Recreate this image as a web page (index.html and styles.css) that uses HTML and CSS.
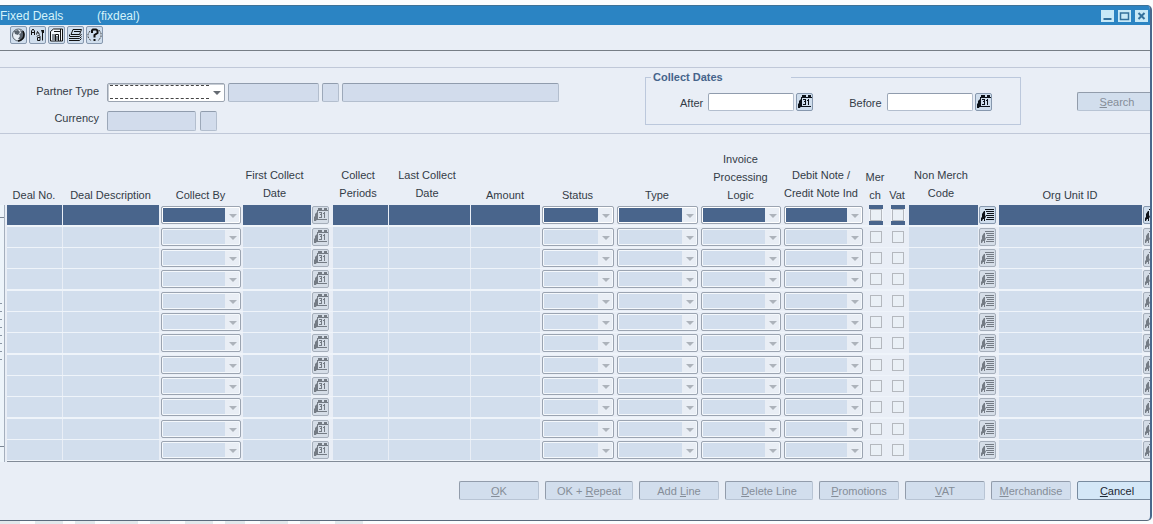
FILE: index.html
```html
<!DOCTYPE html>
<html lang="en">
<head>
<meta charset="utf-8">
<title>Fixed Deals</title>
<link rel="stylesheet" href="styles.css">
</head>
<body>
<svg class="sprite" aria-hidden="true">
  <symbol id="i-calendar" viewBox="0 0 15 16">
    <path d="M4 3h11v1H4zM5 1h4v2H5zM11 1h3v2h-3zM4 3h1v10H4zM3 12h11v1H3zM1 14v-4l1-1V7l2-2v7l-1 2z" fill="currentColor"/>
    <path d="M6 5h3v1H6zM8 6h1v4H8zM7 7h1v1H7zM6 10h3v1H6zM11 5h1v6h-1zM10 6h1v1h-1z" fill="currentColor"/>
  </symbol>
  <symbol id="i-list" viewBox="0 0 15 16">
    <path d="M5 2h9v1H5zM6 4h8v1H6zM7 6h7v1H7zM6 8h8v1H6zM7 10h7v1H7zM6 12h8v1H6z" fill="currentColor"/>
    <path d="M1 14v-3l1-1V7l2-3h1v4l1 2-1 1v3H4v-2H3l-1 2z" fill="currentColor"/>
  </symbol>
</svg>
<main class="window">
  <header class="titlebar">
    <h1>Fixed Deals</h1>
    <span class="module">(fixdeal)</span>
    <div class="winbuttons">
      <button type="button" aria-label="Minimize"><svg viewBox="0 0 12 12"><path d="M2 9h8" stroke-width="2"/></svg></button>
      <button type="button" aria-label="Maximize"><svg viewBox="0 0 12 12"><path d="M2 3h8v6.500H2z" stroke-width="1.500"/></svg></button>
      <button type="button" aria-label="Close"><svg viewBox="0 0 12 12"><path d="M3 3l6 6M9 3l-6 6" stroke-width="2"/></svg></button>
    </div>
  </header>
  <nav class="toolbar" aria-label="Tools">
    <button type="button" class="icon" aria-label="Globe"><svg viewBox="0 0 15 16"><circle cx="7.500" cy="8" r="6" fill="#e8eef5" stroke="#59636e"/><path d="M3 4l4-1 2 2-2 3-3-1zM9 3l4 2v5l-3 3-3-1 2-3-1-2 2-1z" fill="#59636e"/><path d="M12 4c2 4 1 9-5 10" fill="none" stroke="#111" stroke-width="1.500"/></svg></button>
    <button type="button" class="icon" aria-label="Translate"><svg viewBox="0 0 15 16"><path d="M1.500 8V4l1.500-2 1.500 2v4M1.500 5.500h3M6.500 7.500l1-3 2 3M7 9.500c1-2 3-1 3 0v4M10 10.500H7.500v3H10M12.500 5v8.500" fill="none" stroke="#111"/><path d="M11 3h3v3h-2z" fill="#111"/></svg></button>
    <button type="button" class="icon" aria-label="Documents"><svg viewBox="0 0 15 16"><path d="M1.500 4.500l3-2.500h9v12h-12zM5 4.500h7M11.500 2v12M6.500 14V7.500h3V14" fill="#f4f7fa" stroke="#111"/><path d="M3 7h3v7H3zM7 9h2v5H7z" fill="#858b92"/></svg></button>
    <button type="button" class="icon" aria-label="Layers"><svg viewBox="0 0 15 16"><path d="M5 2.500h8.500l-2 5H3zM2 9.500h9.500l2-2.500M1 11.500h10.500l2-2M1 13.500h10.500l2-2M6 4.500h6M1.500 7.500v2" fill="none" stroke="#111"/></svg></button>
    <button type="button" class="icon" aria-label="Help"><svg viewBox="0 0 15 16"><path d="M5 6V3.500L6 2.500h3l1.500 1v2.500L7.500 8v2.500" fill="none" stroke="#111" stroke-width="2"/><path d="M6.500 12h2v2h-2z" fill="#111"/><path d="M3 4L1 7v3l3 4M12 3l2 3v4l-3 4" fill="none" stroke="#444" stroke-dasharray="2 1"/></svg></button>
  </nav>

  <section class="query" aria-label="Search criteria">
    <div class="filters">
      <div class="line">
        <label for="partner">Partner Type</label>
        <span class="combo combo-active"><select id="partner"><option></option></select></span>
        <input class="field w-code" aria-label="Partner code" readonly>
        <input class="field w-tiny" aria-label="Partner lookup" readonly>
        <input class="field w-name" aria-label="Partner name" readonly>
      </div>
      <div class="line line-currency">
        <label for="currency">Currency</label>
        <input class="field w-currency" id="currency" readonly>
        <input class="field w-tiny" aria-label="Currency lookup" readonly>
      </div>
    </div>
    <fieldset class="dates">
      <legend>Collect Dates</legend>
      <div class="daterow">
        <div class="date"><label for="after">After</label><input class="field open" id="after"><button type="button" class="icon" aria-label="Choose after date"><svg><use href="#i-calendar"/></svg></button></div>
        <div class="date"><label for="before">Before</label><input class="field open" id="before"><button type="button" class="icon" aria-label="Choose before date"><svg><use href="#i-calendar"/></svg></button></div>
      </div>
    </fieldset>
    <button type="button" class="btn search" disabled><span><u>S</u>earch</span></button>
  </section>

  <section class="deals" aria-label="Deals">
    <div class="scroller" aria-hidden="true"><i class="cap"></i><i class="grip"></i><i class="cap cap-end"></i></div>
    <table class="grid">
      <colgroup>
        <col class="c-no"><col class="c-desc"><col class="c-by"><col class="c-first"><col class="c-cal"><col class="c-periods"><col class="c-last"><col class="c-amount"><col class="c-status"><col class="c-type"><col class="c-logic"><col class="c-note"><col class="c-mer"><col class="c-vat"><col class="c-code"><col class="c-list"><col><col class="c-end">
      </colgroup>
      <thead>
        <tr>
          <th>Deal No.</th><th>Deal Description</th><th>Collect By</th><th class="raised">First Collect<br>Date</th><th></th><th class="raised">Collect<br>Periods</th><th class="raised">Last Collect<br>Date</th><th>Amount</th><th>Status</th><th>Type</th><th>Invoice<br>Processing<br>Logic</th><th class="raised">Debit Note /<br>Credit Note Ind</th><th>Mer<br>ch</th><th>Vat</th><th class="raised">Non Merch<br>Code</th><th></th><th>Org Unit ID</th><th></th>
        </tr>
      </thead>
      <tbody id="rows"></tbody>
    </table>
  </section>

  <footer class="actions">
    <button type="button" class="btn" disabled><span><u>O</u>K</span></button>
    <button type="button" class="btn wide" disabled><span>OK + <u>R</u>epeat</span></button>
    <button type="button" class="btn" disabled><span>Add <u>L</u>ine</span></button>
    <button type="button" class="btn wide" disabled><span><u>D</u>elete Line</span></button>
    <button type="button" class="btn" disabled><span><u>P</u>romotions</span></button>
    <button type="button" class="btn" disabled><span><u>V</u>AT</span></button>
    <button type="button" class="btn" disabled><span><u>M</u>erchandise</span></button>
    <button type="button" class="btn primary"><span><u>C</u>ancel</span></button>
  </footer>
</main>
<div class="desktop" aria-hidden="true"></div>
<script src="app.js"></script>
</body>
</html>
```

FILE: styles.css
```css
* { box-sizing: border-box; }

body {
  margin: 0;
  padding-top: 5px;
  background: #fbfdfe;
  color: #333b46;
  font: 11px/18px "Liberation Sans", Arial, sans-serif;
  overflow: hidden;
}

button, input, select { font: inherit; margin: 0; }
.sprite { display: none; }

.window {
  margin-right: 1px;
  padding-bottom: 20px;
  background: #e9eef6;
  border-right: 2px solid #49688c;
  border-bottom: 1px solid #5a6a7c;
  border-radius: 0 5px 5px 0;
  overflow: hidden;
}

.titlebar {
  display: flex;
  align-items: center;
  height: 20px;
  padding-right: 2px;
  background: #2b84c3;
  border-top: 1px solid #3c7298;
  color: #d4f3fa;
  font-size: 12px;
}
.titlebar h1 { width: 97px; margin: 0; font: inherit; }
.winbuttons { display: flex; gap: 4px; margin-left: auto; }
.winbuttons button { width: 13px; height: 12px; padding: 0; border: 0; background: #c8e9f7; }
.winbuttons svg { display: block; width: 100%; height: 12px; fill: none; stroke: #34719c; }

.toolbar {
  display: flex;
  gap: 2px;
  height: 26px;
  padding: 1px 10px 0;
  border-bottom: 1px solid #777e86;
}
.icon {
  display: block;
  flex: none;
  width: 17px;
  height: 18px;
  padding: 0;
  border: 1px solid #8798ae;
  border-radius: 2px;
  background: #d0deed;
  color: #0c1118;
}
.icon svg { display: block; width: 15px; height: 16px; }
.icon:disabled { color: #747b84; border-color: #a5aeba; background: #d5dde7; }

.query {
  display: flex;
  align-items: flex-start;
  height: 67px;
  margin-top: 16px;
  border: solid #c0c8d8;
  border-width: 1px 0;
}
.filters { display: grid; gap: 7px; padding-top: 14px; }
.line { display: flex; align-items: center; gap: 3px; }
.line label { width: 99px; margin-right: 5px; padding-bottom: 2px; text-align: right; }
.line-currency { gap: 4px; }
.line-currency label { margin-right: 4px; padding-bottom: 5px; }

.field {
  height: 19px;
  padding: 0 3px;
  border: 1px solid #b3bece;
  border-top-color: #909cad;
  border-left-color: #9ca8b9;
  border-radius: 2px;
  background: #d2dcec;
}
.line-currency .field { height: 20px; }
.open { background: #fff; width: 86px; height: 18px; }
.w-code { width: 91px; }
.w-tiny { width: 17px; }
.w-name { width: 217px; }
.w-currency { width: 89px; }

.combo { position: relative; display: block; height: 18px; }
.combo select {
  appearance: none;
  display: block;
  width: 100%;
  height: 100%;
  padding: 0;
  border: 1px solid #9ba4b1;
  border-radius: 2px;
  background: linear-gradient(to left, #e9eef5 15px, #d2deed 15px);
  box-shadow: inset 0 0 0 1px #f4f8fc;
  opacity: 1;
}
.combo::after {
  content: "";
  position: absolute;
  right: 4px;
  top: 8px;
  border: solid transparent;
  border-width: 4px 4px 0;
  border-top-color: #adb3bb;
}
.combo-active { width: 118px; height: 19px; }
.combo-active select { background: #fff; box-shadow: inset 1px 1px #c6ccd4; }
.combo-active::before {
  content: "";
  position: absolute;
  inset: 2px 16px 3px 3px;
  border: dashed #444;
  border-width: 1px 0;
  pointer-events: none;
}
.combo-active::after { border-top-color: #656b72; }

.dates {
  width: 376px;
  height: 57px;
  margin: 0 0 0 86px;
  padding: 0 0 0 34px;
  border: 1px solid #bcc8dc;
}
.dates legend { width: 140px; margin-left: -29px; padding-left: 2px; color: #46648b; font-weight: bold; }
.daterow { display: flex; gap: 36px; padding-top: 5px; }
.date { display: flex; align-items: center; gap: 2px; }
.date label { margin-right: 3px; padding-top: 3px; }

.btn {
  flex: none;
  width: 80px;
  height: 19px;
  padding: 0;
  border: 1px solid #b8c4d4;
  border-top-color: #929cab;
  border-left-color: #929cab;
  border-radius: 2px;
  background: #d2deed;
  color: #858d98;
  line-height: 16px;
}
.btn.wide { width: 88px; }
.btn.primary { background: #d4e7f7; border-color: #788b9f; color: #1c2733; }
.search { margin: 24px -7px 0 auto; }

.deals { display: flex; align-items: flex-end; margin-top: 16px; }
.scroller {
  display: flex;
  flex-direction: column;
  justify-content: space-between;
  align-items: flex-start;
  flex: none;
  width: 5px;
  height: 257px;
  margin-right: 2px;
  border-right: 1px solid #a5afbd;
  background: #edf4fa;
}
.cap { width: 4px; height: 13px; border-bottom: 1px solid #7c8795; }
.cap-end { height: 16px; border-top: 1px solid #7c8795; border-bottom: 0; }
.grip { width: 2px; height: 58px; background: repeating-linear-gradient(#8b97a6 0 1px, #edf4fa 1px 8px); }

.grid {
  flex: 1;
  width: 0;
  table-layout: fixed;
  border-collapse: separate;
  border-spacing: 0;
  border-bottom: 1px solid #828b97;
}
.c-no { width: 56px; }
.c-desc { width: 97px; }
.c-by { width: 83px; }
.c-first { width: 69px; }
.c-cal { width: 21px; }
.c-periods { width: 56px; }
.c-last { width: 82px; }
.c-amount { width: 70px; }
.c-status { width: 75px; }
.c-type { width: 84px; }
.c-logic { width: 83px; }
.c-note { width: 82px; }
.c-mer { width: 22px; }
.c-vat { width: 22px; }
.c-code { width: 70px; }
.c-list { width: 20px; }
.c-end { width: 7px; }

.grid th {
  height: 55px;
  padding: 0 2px 1px 0;
  font-weight: normal;
  vertical-align: bottom;
  text-align: center;
  white-space: nowrap;
}
.grid th.raised { padding: 0 6px 3px 0; }
.grid td { padding: 0 1px 1px 0; vertical-align: top; overflow: hidden; }
.grid tbody tr td { border-bottom: 0 solid #f1f6fb; background: linear-gradient(#eff4fa, #eff4fa) bottom / 100% 1px no-repeat; }
.grid tr:nth-child(3n + 1) td { padding-bottom: 2px; background-size: 100% 2px; }
.slot { display: block; height: 20px; }
.pick { padding: 1px 1px 0; }
.pick-icon { padding: 1px 0 0; }
.cell { display: block; width: 100%; height: 20px; padding: 0 3px; border: 0; border-radius: 0; background: #d2deed; }
.tick { display: flex; align-items: center; justify-content: center; }
.tick input { appearance: none; width: 12px; height: 12px; border: 1px solid #b4b8be; background: #eaf0f6; }

.current .cell { background: #49658c; }
.current .combo select { background: linear-gradient(to left, #e9eef5 15px, #49658c 15px); box-shadow: inset 0 0 0 1px #fff; }
.current .tick { width: 14px; margin: 0 auto; padding: 0; border: solid #49658c; border-width: 4px 0; background: #f1f5fa; }

.actions { display: flex; justify-content: flex-end; gap: 6px; margin: 19px -7px 0 0; }

.desktop {
  width: 370px;
  height: 3px;
  background: repeating-linear-gradient(to right, #e2e9ec 0 20px, #fbfdfe 20px 35px, #e2e9ec 35px 63px, #fbfdfe 63px 75px);
}
```

FILE: app.js
```js
const ROWS = 12;
const COLUMNS = [
  ["text", "Deal No."], ["text", "Deal Description"], ["combo", "Collect By"],
  ["text", "First Collect Date"], ["calendar", "Choose date"], ["text", "Collect Periods"],
  ["text", "Last Collect Date"], ["text", "Amount"], ["combo", "Status"], ["combo", "Type"],
  ["combo", "Invoice Processing Logic"], ["combo", "Debit Note / Credit Note Ind"],
  ["check", "Merch"], ["check", "Vat"], ["text", "Non Merch Code"],
  ["list", "Choose code"], ["text", "Org Unit ID"], ["list", "Choose org unit"]
];

function cell(kind, name, row) {
  const label = `aria-label="${name}, row ${row + 1}"`;
  if (kind === "text") return `<input class="cell" ${label} readonly>`;
  if (kind === "combo") return `<span class="slot pick"><span class="combo"><select ${label} disabled><option></option></select></span></span>`;
  if (kind === "check") return `<span class="slot tick"><input type="checkbox" ${label} disabled></span>`;
  const enabled = row === 0 && kind === "list";
  return `<span class="slot pick-icon"><button type="button" class="icon" ${label} ${enabled ? "" : "disabled"}><svg><use href="#i-${kind}"/></svg></button></span>`;
}

document.getElementById("rows").innerHTML = Array.from({ length: ROWS }, (_, row) =>
  `<tr class="${row === 0 ? "current" : ""}">` +
  COLUMNS.map(([kind, name]) => `<td>${cell(kind, name, row)}</td>`).join("") +
  "</tr>"
).join("");
```
